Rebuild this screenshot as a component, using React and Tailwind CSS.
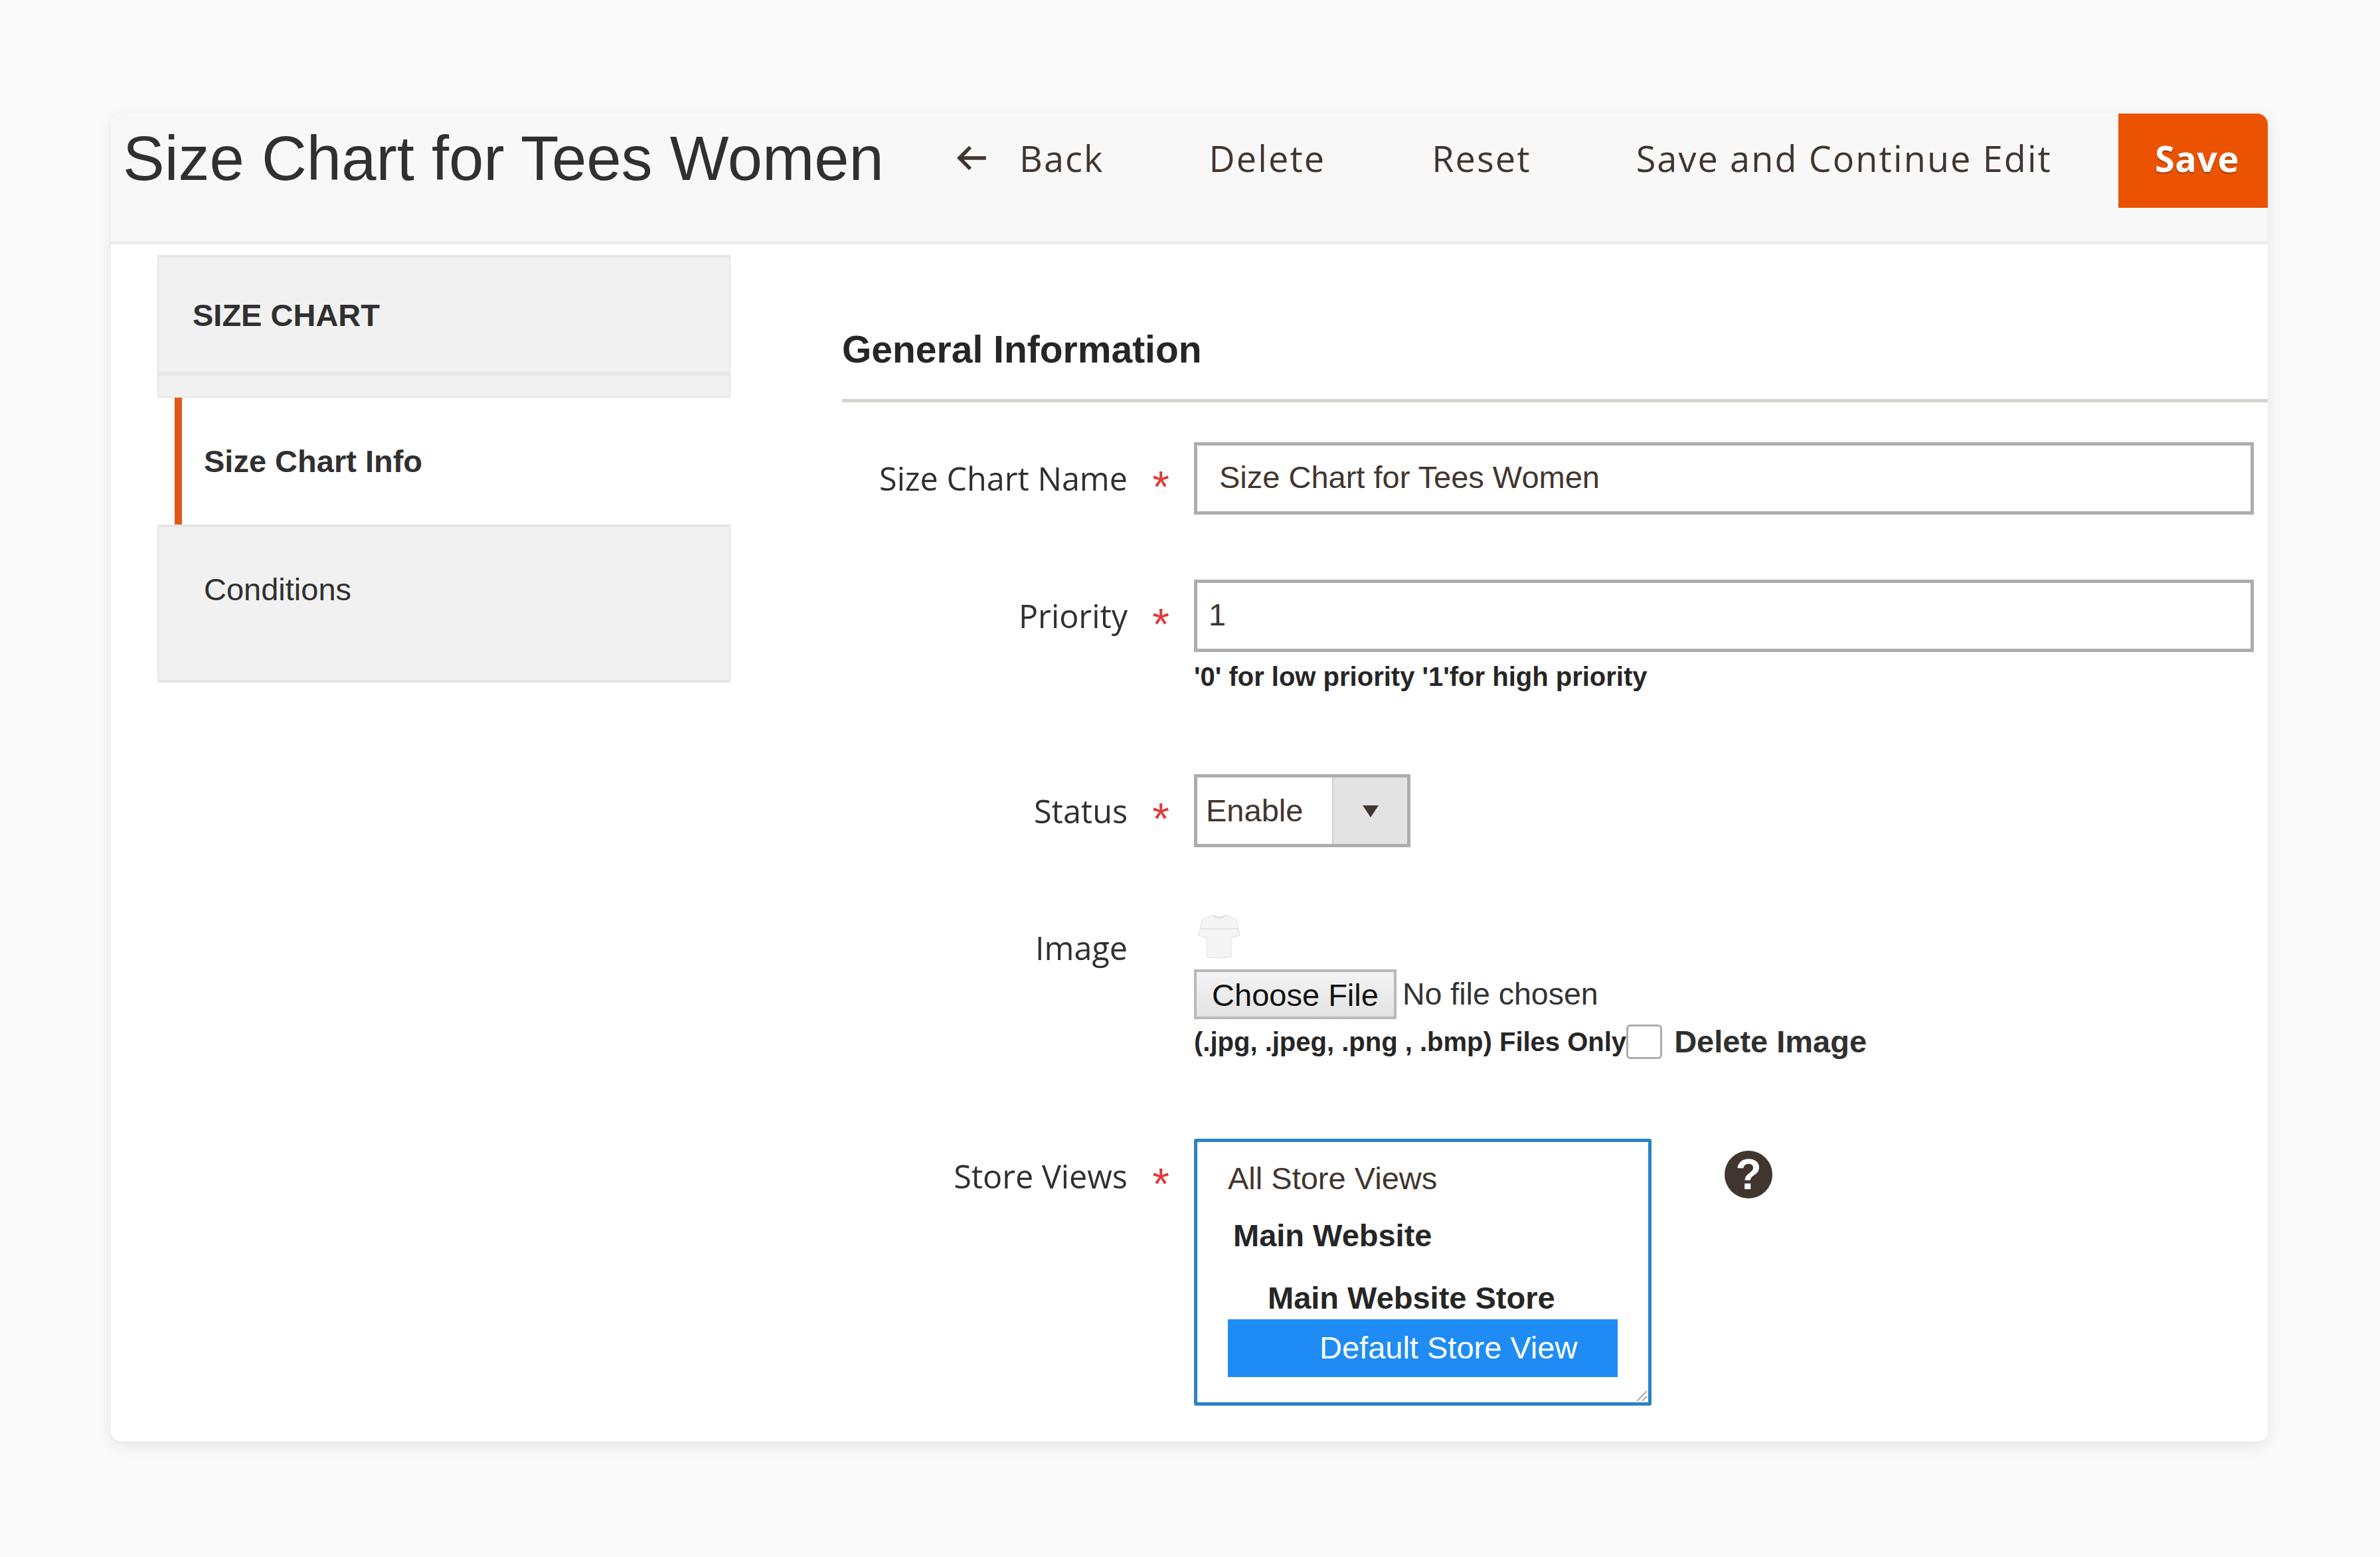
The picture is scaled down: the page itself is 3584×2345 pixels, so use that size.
import React from "react";

const sans = "font-['Liberation_Sans',Arial,sans-serif]";
const open = "font-['Open_Sans',sans-serif]";

function Label({ children, required, className = "" }) {
  return (
    <div className={`flex w-[530px] shrink-0 items-center justify-end ${className}`}>
      <span className={`${open} text-[48.5px] font-medium leading-none text-[#303030]`}>{children}</span>
      <span className={`flex w-[100px] justify-center ${sans} text-[66px] leading-none text-[#e03a3a]`}>
        {required ? <span className="translate-y-[12px]">*</span> : null}
      </span>
    </div>
  );
}

function HeaderLink({ children, className = "" }) {
  return (
    <span className={`${open} mb-[8px] text-[54px] font-medium leading-none tracking-[2.1px] text-[#41362f] ${className}`}>{children}</span>
  );
}

function Tee() {
  return (
    <svg viewBox="0 0 64 70" className="ml-[5px] h-[70px] w-[66px]" fill="#f5f5f5" stroke="#e8e8e8" strokeWidth="1.5">
      <path d="M23 3 C27 6 37 6 41 3 L58 10 L63 34 L51 37 L50 66 C40 68 24 68 14 66 L13 37 L1 34 L6 10 Z" />
      <path d="M4 24 L60 24" stroke="#e2e2e2" strokeWidth="2" />
      <path d="M24 4 C28 9 36 9 40 4" stroke="#dadada" strokeWidth="2" fill="none" />
    </svg>
  );
}

export default function App() {
  return (
    <div className="min-h-[2345px] bg-[#fafafa] pl-[167px] pt-[171px]">
      <div className="h-[2000px] w-[3248px] overflow-hidden rounded-[16px] bg-white shadow-[0_6px_24px_rgba(0,0,0,0.09)]">
        {/* header */}
        <div className="flex h-[197px] items-start border-b-[5px] border-[#ececec] bg-[#f8f8f8]">
          <h1 className={`${sans} ml-[18px] mt-[13px] w-[1253px] shrink-0 text-[94px] font-normal leading-[110px] text-[#303030]`}>
            Size Chart for Tees Women
          </h1>
          <div className="flex h-[142px] flex-1 items-center">
            <svg viewBox="0 0 52 44" className="mb-[8px] h-[40px] w-[50px]" fill="none" stroke="#41362f" strokeWidth="6">
              <path d="M50 22 H6" />
              <path d="M24 4 L6 22 L24 40" />
            </svg>
            <HeaderLink className="ml-[47px]">Back</HeaderLink>
            <HeaderLink className="ml-[158px]">Delete</HeaderLink>
            <HeaderLink className="ml-[160px]">Reset</HeaderLink>
            <HeaderLink className="ml-[158px]">Save and Continue Edit</HeaderLink>
            <button className={`${open} ml-auto h-[142px] w-[225px] bg-[#eb5202] pb-[8px] pl-[12px] text-[54px] font-bold tracking-[0.5px] text-white [text-shadow:0_2px_2px_rgba(0,0,0,0.3)]`}>
              Save
            </button>
          </div>
        </div>

        <div className="flex">
          {/* sidebar */}
          <aside className="ml-[70px] mt-[16px] w-[863px] shrink-0">
            <div className="h-[215px] border-x-[2px] border-t-[4px] border-b-[2px] border-[#e6e6e6] bg-[#f1f1f1]">
              <div className="flex h-[178px] items-center border-b-[6px] border-[#e6e6e6] pl-[51px]">
                <span className={`${sans} text-[47px] font-bold leading-none text-[#303030]`}>SIZE CHART</span>
              </div>
            </div>
            <div className="ml-[26px] flex h-[191px] items-center border-l-[11px] border-[#e3561a] bg-white pl-[33px]">
              <span className={`${sans} text-[47px] font-bold leading-none text-[#303030]`}>Size Chart Info</span>
            </div>
            <div className="h-[238px] border-x-[2px] border-y-[4px] border-[#e6e6e6] bg-[#f1f1f1] pl-[68px] pt-[70px]">
              <span className={`${sans} block text-[47px] leading-none text-[#303030]`}>Conditions</span>
            </div>
          </aside>

          {/* form */}
          <main className="ml-[168px] flex-1">
            <div className="h-[238px] border-b-[5px] border-[#d6d3cc] pt-[122px]">
              <h2 className={`${sans} text-[57px] font-bold leading-[72px] text-[#262626]`}>General Information</h2>
            </div>

            <div className="mt-[60px] flex">
              <Label required className="h-[109px]">Size Chart Name</Label>
              <input
                readOnly
                value="Size Chart for Tees Women"
                className={`${sans} h-[109px] w-[1596px] border-[5px] border-[#adadad] bg-white pb-[4px] pl-[33px] text-[47px] text-[#41362f]`}
              />
            </div>

            <div className="mt-[98px] flex">
              <Label required className="h-[109px]">Priority</Label>
              <div>
                <input
                  readOnly
                  value="1"
                  className={`${sans} h-[109px] w-[1596px] border-[5px] border-[#adadad] bg-white pb-[4px] pl-[17px] text-[47px] text-[#41362f]`}
                />
                <p className={`${sans} mt-[12px] text-[40px] font-bold leading-[50px] text-[#262626]`}>
                  '0' for low priority '1'for high priority
                </p>
              </div>
            </div>

            <div className="mt-[122px] flex">
              <Label required className="h-[110px]">Status</Label>
              <div className="flex h-[110px] w-[326px] border-[5px] border-[#adadad] bg-white">
                <span className={`${sans} flex flex-1 items-center pl-[13px] text-[47px] text-[#41362f]`}>Enable</span>
                <span className="flex w-[113px] items-center justify-center border-l-[2px] border-[#cfcfcf] bg-[#e3e3e3] pt-[2px]">
                  <svg viewBox="0 0 24 18" className="h-[18px] w-[24px]" fill="#41362f">
                    <path d="M0 0 H24 L12 18 Z" />
                  </svg>
                </span>
              </div>
            </div>

            <div className="mt-[99px] flex">
              <Label className="mt-[28px] self-start">Image</Label>
              <div>
                <Tee />
                <div className="mt-[15px] flex items-center">
                  <button className={`${sans} h-[75px] w-[305px] border-[4px] border-[#b9b9b9] bg-gradient-to-b from-[#f4f4f4] to-[#e3e3e3] text-[47px] text-[#111]`}>
                    Choose File
                  </button>
                  <span className={`${sans} ml-[9px] text-[46.5px] text-[#333]`}>No file chosen</span>
                </div>
                <div className="mt-[8px] flex items-center">
                  <span className={`${sans} text-[40px] font-bold leading-[52px] text-[#262626]`}>(.jpg, .jpeg, .png , .bmp) Files Only</span>
                  <input type="checkbox" className="ml-0 h-[52px] w-[54px] appearance-none rounded-[6px] border-[3px] border-[#adadad] bg-white" />
                  <span className={`${sans} ml-[18px] text-[47px] font-bold leading-[52px] text-[#303030]`}>Delete Image</span>
                </div>
              </div>
            </div>

            <div className="mt-[120px] flex">
              <Label required className="mb-auto mt-[23px]">Store Views</Label>
              <div className="relative h-[402px] w-[689px] rounded-[3px] border-[5px] border-[#2a83c4] bg-white pl-[46px] pt-[28px]">
                <div className={`${sans} text-[47px] leading-[54px] text-[#41362f]`}>All Store Views</div>
                <div className={`${sans} ml-[8px] mt-[32px] text-[47px] font-bold leading-[54px] text-[#262626]`}>Main Website</div>
                <div className={`${sans} ml-[60px] mt-[40px] text-[47px] font-bold leading-[54px] text-[#262626]`}>Main Website Store</div>
                <div className={`${sans} mt-[5px] flex h-[87px] w-[587px] items-center bg-[#1e8cf4] pl-[138px] text-[47px] text-white`}>Default Store View</div>
                <svg viewBox="0 0 16 16" className="absolute bottom-[1px] right-[1px] h-[18px] w-[18px]" stroke="#9a9a9a" strokeWidth="1.5">
                  <path d="M2 15 L15 2 M9 15 L15 9" />
                </svg>
              </div>
              <div className={`${sans} ml-[110px] mt-[18px] flex h-[72px] w-[72px] items-center justify-center rounded-full bg-[#41362f] text-[64px] font-bold leading-none text-white`}>
                ?
              </div>
            </div>
          </main>
        </div>
      </div>
    </div>
  );
}
